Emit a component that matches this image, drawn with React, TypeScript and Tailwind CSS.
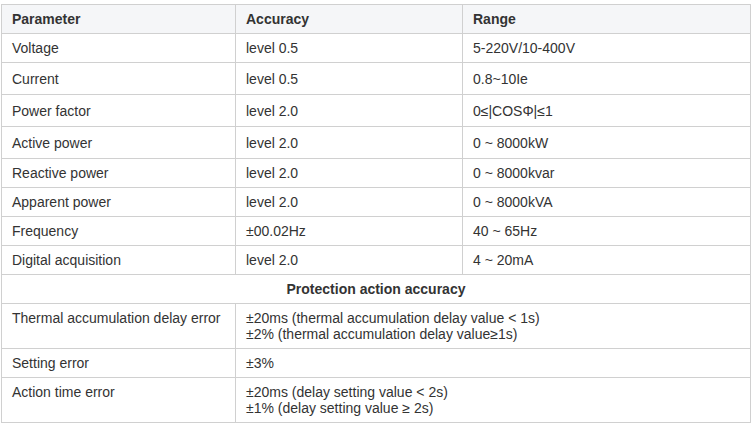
import React from 'react';

type Row = { name: string; accuracy: React.ReactNode; range?: string; h: string };

const measureRows: Row[] = [
  { name: 'Voltage', accuracy: 'level 0.5', range: '5-220V/10-400V', h: 'h-[29px]' },
  { name: 'Current', accuracy: 'level 0.5', range: '0.8~10Ie', h: 'h-[32px]' },
  { name: 'Power factor', accuracy: 'level 2.0', range: '0≤|COSΦ|≤1', h: 'h-[32px]' },
  { name: 'Active power', accuracy: 'level 2.0', range: '0 ~ 8000kW', h: 'h-[32px]' },
  { name: 'Reactive power', accuracy: 'level 2.0', range: '0 ~ 8000kvar', h: 'h-[29px]' },
  { name: 'Apparent power', accuracy: 'level 2.0', range: '0 ~ 8000kVA', h: 'h-[29px]' },
  { name: 'Frequency', accuracy: '±00.02Hz', range: '40 ~ 65Hz', h: 'h-[29px]' },
  { name: 'Digital acquisition', accuracy: 'level 2.0', range: '4 ~ 20mA', h: 'h-[29px]' },
];

const protectionRows: Row[] = [
  {
    name: 'Thermal accumulation delay error',
    accuracy: (
      <>
        ±20ms (thermal accumulation delay value &lt; 1s)
        <br />
        ±2% (thermal accumulation delay value≥1s)
      </>
    ),
    h: 'h-[45px]',
  },
  { name: 'Setting error', accuracy: '±3%', h: 'h-[29px]' },
  {
    name: 'Action time error',
    accuracy: (
      <>
        ±20ms (delay setting value &lt; 2s)
        <br />
        ±1% (delay setting value ≥ 2s)
      </>
    ),
    h: 'h-[45px]',
  },
];

const cell = 'border border-[#d0d0d0] px-[10px] py-0 align-middle leading-[16px]';
// multi-line rows: text sits on the first line
const topCell = 'border border-[#d0d0d0] px-[10px] pt-[6px] pb-0 align-top leading-[16px]';

export default function App() {
  return (
    <div className="bg-white w-[755px] h-[426px] pt-[4px] pl-[1px] font-['Liberation_Sans',Arial,sans-serif] text-[14px] text-[#333]">
      <table className="table-fixed border-collapse w-[749px]">
        <colgroup>
          <col className="w-[234px]" />
          <col className="w-[227px]" />
          <col className="w-[288px]" />
        </colgroup>
        <thead>
          <tr className="bg-[#f5f6f8]">
            <th className={`${cell} h-[29px] text-left font-bold`}>Parameter</th>
            <th className={`${cell} text-left font-bold`}>Accuracy</th>
            <th className={`${cell} text-left font-bold`}>Range</th>
          </tr>
        </thead>
        <tbody>
          {measureRows.map((r) => (
            <tr key={r.name}>
              <td className={`${cell} ${r.h}`}>{r.name}</td>
              <td className={cell}>{r.accuracy}</td>
              <td className={cell}>{r.range}</td>
            </tr>
          ))}
          {/* section title spans the whole table */}
          <tr>
            <td colSpan={3} className={`${cell} h-[29px] text-center font-bold`}>
              Protection action accuracy
            </td>
          </tr>
          {protectionRows.map((r) => {
            const c = r.h === 'h-[45px]' ? topCell : cell;
            return (
              <tr key={r.name}>
                <td className={`${c} ${r.h}`}>{r.name}</td>
                <td colSpan={2} className={c}>{r.accuracy}</td>
              </tr>
            );
          })}
        </tbody>
      </table>
    </div>
  );
}
